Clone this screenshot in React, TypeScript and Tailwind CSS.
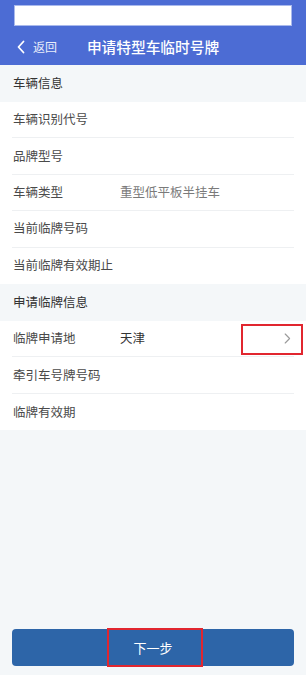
import React from "react";

const font = { fontFamily: '"Noto Sans CJK SC", "Noto Sans", sans-serif' };

function Row({ label, value, valueClass, last, children }: { label: string; value?: string; valueClass?: string; last?: boolean; children?: React.ReactNode }) {
  return (
    <div className={`relative flex items-center h-[36.4px] pl-[1px] ${last ? "" : "border-b border-[#eef0f2]"}`}>
      <span className="w-[107px] shrink-0 text-[12.5px] text-[#4a4a4a]">{label}</span>
      {value && <span className={`text-[12.5px] ${valueClass ?? "text-[#7a7a7a]"}`}>{value}</span>}
      {children}
    </div>
  );
}

function Section({ title }: { title: string }) {
  return (
    <div className="h-[37px] flex items-center px-[13px] bg-[#f4f7f9] text-[12.5px] text-[#333]">{title}</div>
  );
}

export default function App() {
  return (
    <div style={font} className="w-full h-[675px] bg-[#f4f7f9] flex flex-col overflow-hidden">
      <div className="h-[65px] bg-[#4c6cd4] px-[14px] pt-[5px] flex flex-col">
        <div className="h-[21px] bg-white border border-[#a9b9ec]" />
        <div className="flex-1 grid grid-cols-[1fr_auto_1fr] items-center pt-[3px] -mx-[14px]">
          <div className="flex items-center pl-[16px] text-white">
            <svg width="10" height="14" viewBox="0 0 10 14" fill="none">
              <path d="M7.5 1.5 L2.5 7 L7.5 12.5" stroke="white" strokeWidth="1.8" strokeLinecap="round" strokeLinejoin="round" />
            </svg>
            <span className="ml-[7px] text-[12px] text-[#e8ecfa]">返回</span>
          </div>
          <div className="text-[14.7px] font-medium text-white tracking-[0px]">申请特型车临时号牌</div>
          <div />
        </div>
      </div>

      <Section title="车辆信息" />
      <div className="bg-white px-[12px]">
        <Row label="车辆识别代号" />
        <Row label="品牌型号" />
        <Row label="车辆类型" value="重型低平板半挂车" />
        <Row label="当前临牌号码" />
        <Row label="当前临牌有效期止" last />
      </div>

      <Section title="申请临牌信息" />
      <div className="bg-white px-[12px]">
        <Row label="临牌申请地" value="天津" valueClass="text-[#333]">
          <svg className="ml-auto mr-[3px]" width="7" height="11" viewBox="0 0 7 11" fill="none">
            <path d="M1.2 1 L5.6 5.5 L1.2 10" stroke="#9a9a9a" strokeWidth="1.1" strokeLinecap="round" strokeLinejoin="round" />
          </svg>
          <div className="absolute left-[229px] top-[2.6px] w-[62px] h-[31px] border-2 border-[#e1262f]" />
        </Row>
        <Row label="牵引车号牌号码" />
        <Row label="临牌有效期" last />
      </div>

      <div className="flex-1" />
      <div className="relative mx-[12px] mb-[9px] h-[37px] rounded-[4px] bg-[#2d65a8] flex items-center justify-center">
        <span className="text-[13px] text-white">下一步</span>
        <div className="absolute left-[95px] -top-[1px] w-[96px] h-[39px] border-2 border-[#e1262f]" />
      </div>
    </div>
  );
}
